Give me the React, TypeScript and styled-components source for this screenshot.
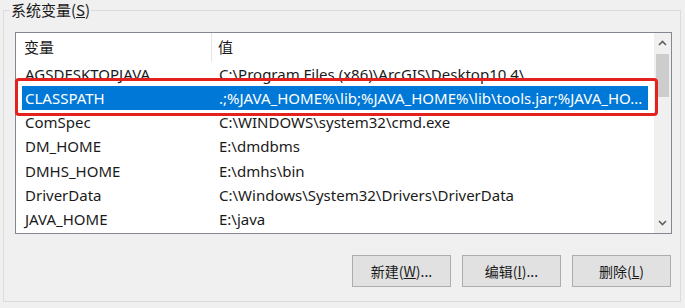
import React from "react";
import styled, { createGlobalStyle } from "styled-components";

const GlobalStyle = createGlobalStyle`
  html, body {
    margin: 0;
    padding: 0;
    background: #f0f0f0;
  }
  body {
    font-family: "Noto Sans", "Noto Sans CJK SC", sans-serif;
    color: #000;
  }
`;

const Group = styled.fieldset`
  box-sizing: border-box;
  margin: 0 0 0 3px;
  padding: 0;
  width: 678px;
  height: 302px;
  border: 1px solid #dcdcdc;
`;

const Legend = styled.legend`
  margin-left: 6px;
  padding: 0 1px;
  font-size: 15px;
  line-height: 20px;
  font-family: "Noto Sans CJK SC", sans-serif;
  color: #1a1a1a;
`;

const Content = styled.div`
  padding: 12px 7px 0 11px;
`;

const ListView = styled.div`
  position: relative;
  box-sizing: border-box;
  width: 657px;
  height: 202px;
  border: 1px solid #828790;
  background: #fff;
  display: flex;
`;

const Table = styled.div`
  flex: 1;
  display: flex;
  flex-direction: column;
  min-width: 0;
`;

const Header = styled.div`
  height: 35px;
  display: flex;
  flex-shrink: 0;
  position: relative;
  z-index: 1;
  background: #fff;
`;

const HeaderCell = styled.div<{ $w?: number; $pad: number; $divider?: boolean }>`
  ${(p) => (p.$w ? `width: ${p.$w}px;` : "flex: 1;")}
  box-sizing: border-box;
  height: 29px;
  padding-left: ${(p) => p.$pad}px;
  font-family: "Noto Sans CJK SC", sans-serif;
  font-size: 15px;
  line-height: 28px;
  color: #1a1a1a;
  border-right: ${(p) => (p.$divider ? "1px solid #e5e5e5" : "none")};
`;

const Viewport = styled.div`
  flex: 1;
  overflow: hidden;
`;

const Rows = styled.div<{ $offset: number }>`
  margin-top: ${(p) => -p.$offset}px;
  padding-left: 6px;
`;

const Row = styled.div<{ $selected?: boolean }>`
  display: flex;
  width: 626px;
  height: 24.3px;
  align-items: center;
  background: ${(p) => (p.$selected ? "#0078d7" : "transparent")};
  color: ${(p) => (p.$selected ? "#fff" : "#1a1a1a")};
  font-size: 15px;
  white-space: nowrap;
`;

const Cell = styled.div<{ $w?: number; $pad: number }>`
  ${(p) => (p.$w ? `width: ${p.$w}px;` : "flex: 1;")}
  box-sizing: border-box;
  padding-left: ${(p) => p.$pad}px;
  overflow: hidden;
`;

const ScrollBar = styled.div`
  width: 17px;
  display: flex;
  flex-direction: column;
  align-items: center;
  background: #f0f0f0;
`;

const Arrow = styled.div`
  height: 20px;
  width: 17px;
  display: flex;
  align-items: center;
  justify-content: center;
`;

const Track = styled.div`
  flex: 1;
  width: 13px;
`;

const Thumb = styled.div`
  margin-top: 1px;
  height: 43px;
  background: #cdcdcd;
`;

const Highlight = styled.div`
  position: absolute;
  left: -1px;
  top: 45px;
  width: 643px;
  height: 38px;
  box-sizing: border-box;
  border: 3px solid #e3211f;
  border-radius: 4px;
  pointer-events: none;
  z-index: 2;
`;

const ButtonRow = styled.div`
  display: flex;
  justify-content: flex-end;
  gap: 11px;
  margin-top: 21px;
  padding-right: 2px;
`;

const Button = styled.button`
  width: 99px;
  height: 32px;
  box-sizing: border-box;
  border: 1px solid #adadad;
  background: #e1e1e1;
  font-family: "Noto Sans CJK SC", sans-serif;
  font-size: 14px;
  color: #1a1a1a;
  padding: 0;
  cursor: default;
`;

const vars: [string, string][] = [
  ["AGSDESKTOPJAVA", "C:\\Program Files (x86)\\ArcGIS\\Desktop10.4\\"],
  ["CLASSPATH", ".;%JAVA_HOME%\\lib;%JAVA_HOME%\\lib\\tools.jar;%JAVA_HO..."],
  ["ComSpec", "C:\\WINDOWS\\system32\\cmd.exe"],
  ["DM_HOME", "E:\\dmdbms"],
  ["DMHS_HOME", "E:\\dmhs\\bin"],
  ["DriverData", "C:\\Windows\\System32\\Drivers\\DriverData"],
  ["JAVA_HOME", "E:\\java"],
];

function Chevron({ up }: { up?: boolean }) {
  return (
    <svg width="9" height="6" viewBox="0 0 9 6">
      <path
        d={up ? "M1 5 L4.5 1.5 L8 5" : "M1 1 L4.5 4.5 L8 1"}
        fill="none"
        stroke="#606060"
        strokeWidth="1.6"
      />
    </svg>
  );
}

export default function App(): JSX.Element {
  return (
    <>
      <GlobalStyle />
      <Group>
        <Legend>
          系统变量(<u>S</u>)
        </Legend>
        <Content>
          <ListView>
            <Table>
              <Header>
                <HeaderCell $w={196} $pad={8} $divider>
                  变量
                </HeaderCell>
                <HeaderCell $pad={6}>值</HeaderCell>
              </Header>
              <Viewport>
                <Rows $offset={6.6}>
                  {vars.map(([name, value]) => (
                    <Row key={name} $selected={name === "CLASSPATH"}>
                      <Cell $w={190} $pad={3}>
                        {name}
                      </Cell>
                      <Cell $pad={7}>{value}</Cell>
                    </Row>
                  ))}
                </Rows>
              </Viewport>
            </Table>
            <ScrollBar>
              <Arrow>
                <Chevron up />
              </Arrow>
              <Track>
                <Thumb />
              </Track>
              <Arrow>
                <Chevron />
              </Arrow>
            </ScrollBar>
            <Highlight />
          </ListView>
          <ButtonRow>
            <Button>
              新建(<u>W</u>)...
            </Button>
            <Button>
              编辑(<u>I</u>)...
            </Button>
            <Button>
              删除(<u>L</u>)
            </Button>
          </ButtonRow>
        </Content>
      </Group>
    </>
  );
}
